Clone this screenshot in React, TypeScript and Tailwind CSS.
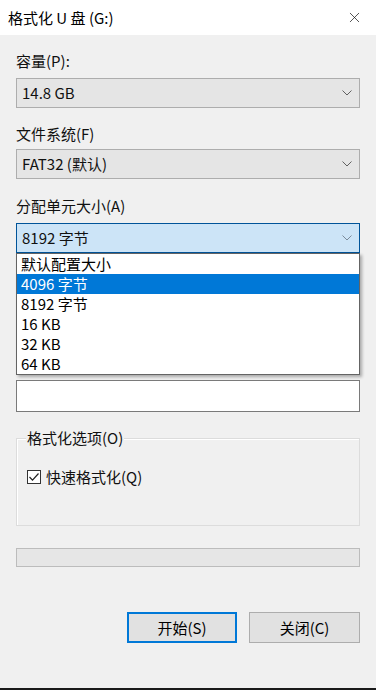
import { X } from 'lucide-react'

const FONT = { fontFamily: '"Noto Sans CJK SC", "Liberation Sans", sans-serif' }

const sizes = ['默认配置大小', '4096 字节', '8192 字节', '16 KB', '32 KB', '64 KB']

function Chevron({ color = '#606060' }: { color?: string }) {
  return (
    <svg width="10" height="6" viewBox="0 0 10 6" className="shrink-0">
      <path d="M0.5 0.5 L5 5 L9.5 0.5" fill="none" stroke={color} strokeWidth="1" />
    </svg>
  )
}

function Combo({ value }: { value: string }) {
  return (
    <div className="h-[30px] flex items-center justify-between pl-[5px] pr-[7px] bg-[#e5e5e5] border border-[#adadad] text-[15px] leading-[20px] text-[#111]">
      <span>{value}</span>
      <Chevron />
    </div>
  )
}

export default function App() {
  return (
    <div className="w-[376px] h-[690px] bg-[#f0f0f0] flex flex-col overflow-hidden text-[#111]" style={FONT}>
      {/* title bar */}
      <div className="h-[35px] bg-white flex items-center justify-between pl-2 pr-[13px] shrink-0">
        <span className="text-[15px] leading-[20px] text-black">格式化 U 盘 (G:)</span>
        <X size={17} strokeWidth={1} color="#111" />
      </div>

      <div className="flex-1 flex flex-col px-4">
        <div className="mt-[16px] h-[20px] text-[15px] leading-[20px]">容量(P):</div>
        <div className="mt-[7px]">
          <Combo value="14.8 GB" />
        </div>

        <div className="mt-[16px] h-[20px] text-[15px] leading-[20px]">文件系统(F)</div>
        <div className="mt-[5px]">
          <Combo value="FAT32 (默认)" />
        </div>

        <div className="mt-[17px] h-[20px] text-[15px] leading-[20px]">分配单元大小(A)</div>
        <div className="mt-[7px] relative">
          <div className="h-[30px] flex items-center justify-between pl-[5px] pr-[7px] bg-[#cce4f7] border border-[#005499] text-[15px] leading-[20px]">
            <span>8192 字节</span>
            <Chevron color="#7a8a99" />
          </div>
          <div className="absolute left-0 right-0 top-[30px] z-10 bg-white border border-[#646464] shadow-[2px_2px_3px_rgba(0,0,0,0.3)]">
            {sizes.map((s, i) => (
              <div
                key={s}
                className={`h-[20px] pl-[4px] text-[15px] leading-[20px] ${i === 1 ? 'bg-[#0078d7] text-white' : 'text-black'}`}
              >
                {s}
              </div>
            ))}
          </div>
        </div>

        {/* volume label (behind list) */}
        <div className="mt-[127px] h-[32px] bg-white border border-[#7a7a7a]" />

        {/* options group */}
        <div className="mt-[26px] relative h-[88px] border border-[#dcdcdc] shadow-[inset_1px_1px_0_#ffffff]">
          <span className="absolute left-[9px] top-[-11px] px-px bg-[#f0f0f0] text-[15px] leading-[20px]">格式化选项(O)</span>
          <div className="flex items-center gap-[5px] pl-[10px] pt-[28px]">
            <div className="w-[14px] h-[14px] bg-white border border-[#333] flex items-center justify-center">
              <svg width="12" height="10" viewBox="0 0 12 10">
                <path d="M1.5 5 L4.5 8.2 L10.5 1.5" fill="none" stroke="#222" strokeWidth="1.2" />
              </svg>
            </div>
            <span className="text-[15px] leading-[20px]">快速格式化(Q)</span>
          </div>
        </div>

        {/* progress */}
        <div className="mt-[22px] h-[19px] bg-[#e6e6e6] border border-[#bcbcbc]" />

        {/* buttons */}
        <div className="mt-[45px] flex justify-end gap-[12px]">
          <button className="w-[110px] h-[31px] bg-[#e1e1e1] border-2 border-[#0078d7] text-[15px] leading-[20px] text-black">
            开始(S)
          </button>
          <button className="w-[111px] h-[31px] bg-[#e1e1e1] border border-[#adadad] text-[15px] leading-[20px] text-black">
            关闭(C)
          </button>
        </div>
      </div>

      <div className="h-[2px] bg-[#1a1a1a] shrink-0" />
    </div>
  )
}
